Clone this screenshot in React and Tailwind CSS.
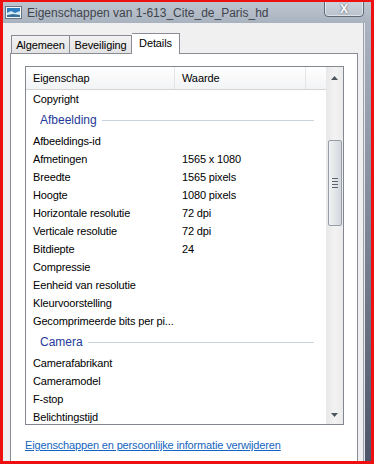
const rows = [
  { type: 'row', name: 'Copyright' },
  { type: 'group', name: 'Afbeelding' },
  { type: 'row', name: 'Afbeeldings-id' },
  { type: 'row', name: 'Afmetingen', value: '1565 x 1080' },
  { type: 'row', name: 'Breedte', value: '1565 pixels' },
  { type: 'row', name: 'Hoogte', value: '1080 pixels' },
  { type: 'row', name: 'Horizontale resolutie', value: '72 dpi' },
  { type: 'row', name: 'Verticale resolutie', value: '72 dpi' },
  { type: 'row', name: 'Bitdiepte', value: '24' },
  { type: 'row', name: 'Compressie' },
  { type: 'row', name: 'Eenheid van resolutie' },
  { type: 'row', name: 'Kleurvoorstelling' },
  { type: 'row', name: 'Gecomprimeerde bits per pi...' },
  { type: 'group', name: 'Camera' },
  { type: 'row', name: 'Camerafabrikant' },
  { type: 'row', name: 'Cameramodel' },
  { type: 'row', name: 'F-stop' },
  { type: 'row', name: 'Belichtingstijd' },
];

function PictureIcon() {
  return (
    <svg width="17" height="13" viewBox="0 0 17 13">
      <rect x="0.5" y="0.5" width="16" height="12" fill="#f4f6f8" stroke="#6a7686" />
      <rect x="2" y="2" width="13" height="9" fill="#2f7fc0" />
      <path d="M2 7 L6 5 L10 7 L15 5 L15 11 L2 11 Z" fill="#d8ecf6" />
      <path d="M2 9 L8 8 L15 9 L15 11 L2 11 Z" fill="#3a6f9a" />
    </svg>
  );
}

export default function App() {
  return (
    <div
      className="w-[374px] h-[464px] overflow-hidden flex flex-col border-t-2 border-l-[3px] border-r-[3px] border-b-[3px] border-[#ee1010] bg-[#f0f0f0]"
      style={{ fontFamily: '"Liberation Sans", Arial, sans-serif' }}
    >
      {/* Title bar */}
      <div className="h-[21px] shrink-0 flex items-start bg-gradient-to-b from-[#bdc5cf] via-[#b3bcc7] to-[#a9b3bf] relative">
        <div className="ml-[2px] mt-[4px]">
          <PictureIcon />
        </div>
        <span className="ml-[5px] mt-[2px] text-[12px] text-[#3f444c] leading-[18px] whitespace-nowrap">
          Eigenschappen van 1-613_Cite_de_Paris_hd
        </span>
        <div className="absolute left-[321px] top-[-2px] w-[40px] h-[17px] rounded-b-[4px] border border-[#5f6977] bg-gradient-to-b from-[#cfd5dd] to-[#b9c2cd] flex items-center justify-center shadow-[inset_0_0_0_1px_rgba(255,255,255,0.5)]">
          <span className="text-[12px] font-bold text-white leading-none [text-shadow:0_0_2px_#3b4350]">X</span>
        </div>
      </div>

      <div className="flex-1 flex min-h-0">
        {/* Client area */}
        <div className="flex-1 flex flex-col pl-[7px] pt-[9px] min-w-0">
          {/* Tabs */}
          <div className="flex items-end h-[21px] relative z-10 pl-[1px] text-[11px] tracking-[-0.1px] text-black">
            <div className="h-[18px] w-[59px] flex justify-center border border-b-0 border-[#898c95] bg-gradient-to-b from-[#f2f2f2] to-[#e3e3e3] leading-[18px]">
              Algemeen
            </div>
            <div className="h-[18px] w-[62px] flex justify-center border border-b-0 border-l-0 border-[#898c95] bg-gradient-to-b from-[#f2f2f2] to-[#e3e3e3] leading-[18px]">
              Beveiliging
            </div>
            <div className="h-[21px] w-[48px] flex justify-center border border-b-0 border-l-0 border-[#898c95] bg-white leading-[18px] mb-[-1px]">
              Details
            </div>
          </div>

          {/* Tab page */}
          <div className="flex-1 w-[348px] bg-white border border-b-0 border-[#898c95] pt-[12px] pl-[14px] flex flex-col min-h-0">
            {/* List box */}
            <div className="w-[319px] h-[359px] border border-[#828790] flex overflow-hidden bg-white">
              <div className="flex-1 flex flex-col min-w-0">
                <div className="h-[23px] shrink-0 flex bg-gradient-to-b from-white to-[#f2f3f5] border-b border-[#d5d5d5] text-[11px] tracking-[-0.1px] text-black">
                  <div className="w-[149px] pl-[7px] flex items-center border-r border-[#e3e5e8]">Eigenschap</div>
                  <div className="w-[131px] pl-[7px] flex items-center border-r border-[#e3e5e8]">Waarde</div>
                  <div className="flex-1" />
                </div>
                <div className="flex-1 overflow-hidden">
                  {rows.map((r, i) =>
                    r.type === 'group' ? (
                      <div key={i} className="h-[24px] flex items-center pl-[14px] pr-[12px]">
                        <span className="text-[12px] text-[#1e3a9a]">{r.name}</span>
                        <div className="flex-1 h-px bg-[#c9d2de] ml-[5px] mt-[1px]" />
                      </div>
                    ) : (
                      <div key={i} className="h-[18px] flex items-center text-[11px] tracking-[-0.15px] text-black">
                        <div className="w-[149px] pl-[7px] whitespace-nowrap">{r.name}</div>
                        <div className="pl-[7px] whitespace-nowrap">{r.value || ''}</div>
                      </div>
                    )
                  )}
                </div>
              </div>
              {/* Scrollbar */}
              <div className="w-[17px] shrink-0 bg-gradient-to-r from-[#e8e8e8] via-[#f2f2f2] to-[#ececec] flex flex-col items-center">
                <div className="h-[17px] flex items-center justify-center mt-[2px]">
                  <svg width="7" height="4" viewBox="0 0 7 4"><path d="M0 4 L3.5 0 L7 4 Z" fill="#4d5560" /></svg>
                </div>
                <div className="mt-[54px] w-[14px] h-[86px] rounded-[2px] border border-[#989ea7] bg-gradient-to-r from-[#f1f2f4] via-[#e3e5e8] to-[#d3d7dc] flex flex-col items-center justify-center gap-[2px]">
                  <div className="w-[6px] h-px bg-[#5c6470]" />
                  <div className="w-[6px] h-px bg-[#5c6470]" />
                  <div className="w-[6px] h-px bg-[#5c6470]" />
                  <div className="w-[6px] h-px bg-[#5c6470]" />
                </div>
                <div className="flex-1" />
                <div className="h-[17px] flex items-center justify-center mb-[1px]">
                  <svg width="7" height="4" viewBox="0 0 7 4"><path d="M0 0 L7 0 L3.5 4 Z" fill="#4d5560" /></svg>
                </div>
              </div>
            </div>

            <a href="#" className="mt-[12px] text-[11px] tracking-[-0.15px] text-[#1565c0] underline whitespace-nowrap self-start">
              Eigenschappen en persoonlijke informatie verwijderen
            </a>
          </div>
        </div>

        {/* Right frame */}
        <div className="w-[8px] shrink-0 flex">
          <div className="w-[1px] bg-[#9ba1aa]" />
          <div className="w-[1px] bg-[#e4e7ea]" />
          <div className="flex-1 bg-gradient-to-b from-[#aab3bf] via-[#7b8494] to-[#4d5668]" />
        </div>
      </div>
    </div>
  );
}
